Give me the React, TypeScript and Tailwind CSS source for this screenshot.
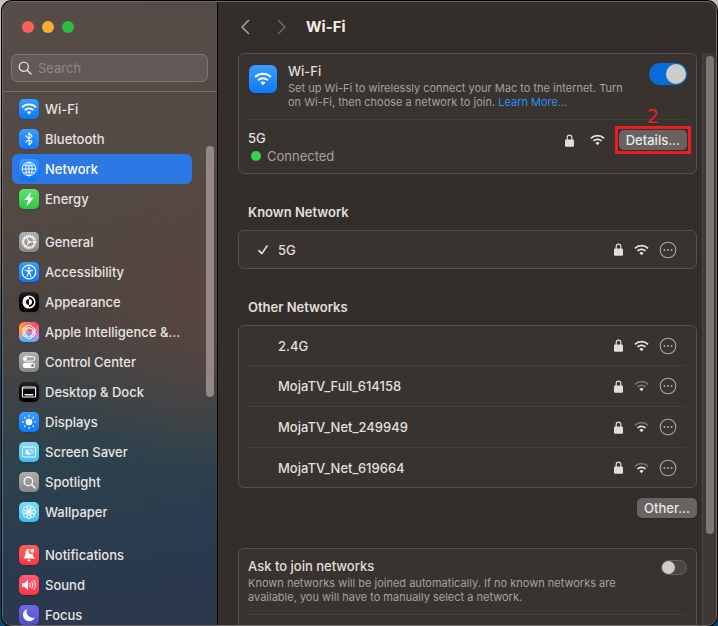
import { useState } from "react";
import type { ReactNode } from "react";
import clsx from "clsx";

type TNavItem = {
  name: string;
  bg: string;
  icon: ReactNode;
};

type TNetwork = {
  name: string;
  strength: number;
};

const WifiGlyph = ({
  className,
  strength = 3,
}: {
  className?: string;
  strength?: number;
}) => (
  <svg viewBox="0 0 16 12" className={className} fill="none" stroke="currentColor">
    <path d="M1 4.3a9.9 9.9 0 0 1 14 0" strokeWidth="1.8" opacity={strength > 2 ? 1 : 0.35} />
    <path d="M3.7 7.1a6 6 0 0 1 8.6 0" strokeWidth="1.8" opacity={strength > 1 ? 1 : 0.35} />
    <path
      d="M8 8.2c-.9 0-1.700.3-2.200.9L8 11.600l2.200-2.500c-.5-.6-1.300-.9-2.200-.9z"
      fill="currentColor"
      stroke="none"
    />
  </svg>
);

const LockGlyph = () => (
  <svg viewBox="0 0 9 13" className="h-[13px] w-[9px] text-[#dfdedd]">
    <path d="M2.2 6V3.4a2.3 2.3 0 0 1 4.6 0V6" fill="none" stroke="currentColor" strokeWidth="1.2" />
    <rect x="0" y="5.4" width="9" height="7.4" rx="1" fill="currentColor" />
  </svg>
);

const SearchGlyph = ({ className }: { className?: string }) => (
  <svg viewBox="0 0 14 14" className={className} fill="none" stroke="currentColor" strokeLinecap="round">
    <circle cx="5.8" cy="5.8" r="4.6" strokeWidth="1.3" />
    <path d="M9.2 9.2l3.8 3.8" strokeWidth="1.5" />
  </svg>
);

const Glyph = ({ children }: { children: ReactNode }) => (
  <svg
    viewBox="0 0 20 20"
    className="size-5"
    fill="none"
    stroke="currentColor"
    strokeLinecap="round"
    strokeLinejoin="round"
  >
    {children}
  </svg>
);

const blue = "bg-linear-to-b from-[#3a9bff] to-[#0a78fb]";
const gray = "bg-linear-to-b from-[#b0b0b0] to-[#868686]";
const black = "bg-linear-to-b from-[#242424] to-black";
const cyan = "bg-linear-to-b from-[#7bdcfb] to-[#45b9ee]";

const groups: TNavItem[][] = [
  [
    { name: "Wi-Fi", bg: blue, icon: <WifiGlyph className="h-3 w-4" /> },
    {
      name: "Bluetooth",
      bg: blue,
      icon: (
        <Glyph>
          <path d="M6.800 6.800l6.200 6-3 3.200V4l3 3.200-6.200 6" strokeWidth="1.1" />
        </Glyph>
      ),
    },
    {
      name: "Network",
      bg: blue,
      icon: (
        <Glyph>
          <g strokeWidth="0.9">
            <circle cx="10" cy="10" r="6.8" />
            <ellipse cx="10" cy="10" rx="3.2" ry="6.8" />
            <path d="M10 3.2v13.6M3.2 10h13.6M4.6 6q5.4 2.4 10.8 0M4.6 14q5.4-2.4 10.8 0" />
          </g>
        </Glyph>
      ),
    },
    {
      name: "Energy",
      bg: "bg-linear-to-b from-[#5fe06c] to-[#2ac944]",
      icon: (
        <Glyph>
          <path d="M12.2 2.800L5.400 11h3.800l-1.600 6.200L14.600 8.800h-4z" fill="currentColor" stroke="none" />
        </Glyph>
      ),
    },
  ],
  [
    {
      name: "General",
      bg: gray,
      icon: (
        <Glyph>
          <circle cx="10" cy="10" r="6.6" strokeWidth="1.5" strokeDasharray="1.2 0.9" strokeLinecap="butt" />
          <circle cx="10" cy="10" r="5.4" strokeWidth="1.1" />
          <path d="M10 10h5M10 10L7.4 5.6M10 10l-2.6 4.4" strokeWidth="1" />
          <circle cx="10" cy="10" r="1.3" fill="currentColor" stroke="none" />
        </Glyph>
      ),
    },
    {
      name: "Accessibility",
      bg: blue,
      icon: (
        <Glyph>
          <circle cx="10" cy="10" r="6.8" strokeWidth="1.2" />
          <circle cx="10" cy="6.2" r="1.2" fill="currentColor" stroke="none" />
          <path d="M6.4 8.3l2.7.6h1.8l2.7-.6M9.2 9v2.4l-1.1 3M10.8 9v2.4l1.1 3M10 9v2.4" strokeWidth="1.1" />
        </Glyph>
      ),
    },
    {
      name: "Appearance",
      bg: black,
      icon: (
        <Glyph>
          <circle cx="10" cy="10" r="5.8" strokeWidth="1.5" />
          <path d="M10 4.2a5.8 5.8 0 0 0 0 11.6z" fill="currentColor" stroke="none" />
          <path d="M10 7a3 3 0 0 0 0 6z" fill="#111" stroke="none" />
          <path d="M10 7a3 3 0 0 1 0 6z" fill="currentColor" stroke="none" />
        </Glyph>
      ),
    },
    {
      name: "Apple Intelligence &...",
      bg: "bg-[conic-gradient(#ff6a5a,#fb4a6c,#f06aa8,#b98cf0,#6aa0f5,#3fb3f5,#b39ae0,#ff9d3b,#ff8a4a,#ff6a5a)]",
      icon: (
        <Glyph>
          <g strokeWidth="1.100">
            <path d="M10 3.200c2 0 2.600 1.600 4 2.200 1.600.8 2.400 2 1.900 3.600-.4 1.400.4 2.400-.1 3.900-.6 1.600-2.300 1.500-3.200 2.600-.9 1-1.600 1.400-2.600 1.400s-1.700-.4-2.600-1.400c-.9-1.100-2.600-1-3.200-2.600-.5-1.500.3-2.500-.1-3.900C3.600 7.400 4.400 6.200 6 5.400c1.400-.6 2-2.200 4-2.200z" />
            <path d="M10 5.600l3.600 1.700.9 3.900-2.500 3.100H8l-2.500-3.100.9-3.900z" />
          </g>
        </Glyph>
      ),
    },
    {
      name: "Control Center",
      bg: gray,
      icon: (
        <Glyph>
          <rect x="4.2" y="4.7" width="11.6" height="4.4" rx="2.2" strokeWidth="1" />
          <circle cx="6.4" cy="6.9" r="1.7" fill="currentColor" stroke="none" />
          <rect x="3.8" y="10.8" width="12.4" height="5.2" rx="2.6" fill="currentColor" stroke="none" />
          <circle cx="13.6" cy="13.4" r="1.6" fill="#8c8c8c" stroke="none" />
        </Glyph>
      ),
    },
    {
      name: "Desktop & Dock",
      bg: black,
      icon: (
        <Glyph>
          <rect x="3.4" y="5" width="13.2" height="10" rx="1" strokeWidth="1.1" />
          <path d="M4 6.3h12" strokeWidth="0.6" />
          <path d="M6.2 12.8h7.6" strokeWidth="1.6" />
        </Glyph>
      ),
    },
    {
      name: "Displays",
      bg: blue,
      icon: (
        <Glyph>
          <circle cx="10" cy="10" r="3.3" fill="currentColor" stroke="none" />
          <path
            d="M10 3.6v.9M10 15.5v.9M3.6 10h.9M15.5 10h.9M5.5 5.5l.6.6M13.9 13.9l.6.6M5.5 14.5l.6-.6M13.9 6.1l.6-.6"
            strokeWidth="1.2"
          />
        </Glyph>
      ),
    },
    {
      name: "Screen Saver",
      bg: cyan,
      icon: (
        <Glyph>
          <rect x="3.5" y="5" width="13" height="10" rx="1" strokeWidth="1" />
          <rect x="5.6" y="7" width="8.8" height="6" fill="currentColor" stroke="none" opacity="0.3" />
          <path d="M9 7.8a2.5 2.5 0 1 0 2.7 3.6A2.6 2.6 0 0 1 9 7.8z" fill="currentColor" stroke="none" />
          <path d="M12 8.2h.1M13.6 9.6h.1" strokeWidth="1" />
        </Glyph>
      ),
    },
    { name: "Spotlight", bg: gray, icon: <SearchGlyph className="size-[13px]" /> },
    {
      name: "Wallpaper",
      bg: cyan,
      icon: (
        <Glyph>
          <circle cx="10" cy="10" r="2.2" fill="currentColor" stroke="none" />
          <g strokeWidth="0.9">
            <circle cx="10" cy="5.2" r="1.9" />
            <circle cx="10" cy="14.8" r="1.9" />
            <circle cx="5.2" cy="10" r="1.9" />
            <circle cx="14.8" cy="10" r="1.9" />
            <circle cx="6.6" cy="6.6" r="1.9" />
            <circle cx="13.4" cy="6.6" r="1.9" />
            <circle cx="6.6" cy="13.4" r="1.9" />
            <circle cx="13.4" cy="13.4" r="1.9" />
          </g>
        </Glyph>
      ),
    },
  ],
  [
    {
      name: "Notifications",
      bg: "bg-linear-to-b from-[#ff5f57] to-[#fa3345]",
      icon: (
        <Glyph>
          <path
            d="M9.8 4C7.4 4 6.6 6 6.4 8.2c-.2 2.6-.7 3.6-2.2 5.2h11.6c-1.4-1.4-2-2.6-2.2-4.6A2.6 2.6 0 0 1 11 4.2 4 4 0 0 0 9.8 4z"
            fill="currentColor"
            stroke="none"
          />
          <circle cx="13.3" cy="5.8" r="2" fill="currentColor" stroke="none" />
          <path d="M8.3 14.8h3.4a1.7 1.7 0 0 1-3.4 0z" fill="currentColor" stroke="none" />
        </Glyph>
      ),
    },
    {
      name: "Sound",
      bg: "bg-linear-to-b from-[#ff5b78] to-[#fc3349]",
      icon: (
        <Glyph>
          <path d="M3 8.2h2.3L9 5v10l-3.7-3.2H3z" fill="currentColor" stroke="none" />
          <path d="M10.8 8.2q1.4 1.8 0 3.6M12.8 6.8q2.4 3.2 0 6.4M14.8 5.4q3.4 4.6 0 9.2" strokeWidth="1" />
        </Glyph>
      ),
    },
    {
      name: "Focus",
      bg: "bg-linear-to-b from-[#6f6be6] to-[#504cc8]",
      icon: (
        <Glyph>
          <path d="M8 4a6.3 6.3 0 1 0 8 8.6A6.5 6.5 0 0 1 8 4z" fill="currentColor" stroke="none" />
        </Glyph>
      ),
    },
  ],
];

const otherNetworks: TNetwork[] = [
  { name: "2.4G", strength: 3 },
  { name: "MojaTV_Full_614158", strength: 1 },
  { name: "MojaTV_Net_249949", strength: 2 },
  { name: "MojaTV_Net_619664", strength: 2 },
];

const Sidebar = () => {
  const [active, setActive] = useState("Network");

  return (
    <aside className="flex w-[215px] shrink-0 flex-col border-r border-black bg-[radial-gradient(circle_at_100%_48%,#5a453f_0%,#5a453f00_45%),linear-gradient(172deg,#564d48_0%,#524944_34%,#4a4542_52%,#2d424d_72%,#2b3a4f_86%,#2c384c_100%)]">
      <div className="flex gap-2 px-[19px] pt-[19px]">
        <button aria-label="Close" className="size-3 rounded-full bg-[#fe5f57]" />
        <button aria-label="Minimize" className="size-3 rounded-full bg-[#fcab2f]" />
        <button aria-label="Zoom" className="size-3 rounded-full bg-[#28bf3c]" />
      </div>
      <div className="border-b border-[#756d69] pt-[21px] pr-[9px] pb-[9px] pl-2">
        <label className="flex h-7 items-center gap-1.5 rounded-md border border-[#7d7572] bg-[#635a57] pl-1.5">
          <SearchGlyph className="size-[14px] shrink-0 text-[#e0dedd]" />
          <input
            type="text"
            aria-label="Search"
            placeholder="Search"
            className="w-full min-w-0 bg-transparent outline-none placeholder:text-[#8f8885]"
          />
        </label>
      </div>
      <div className="flex min-h-0 flex-1 justify-between pr-[3px] pl-[9px]">
        <nav className="flex w-[180px] flex-col gap-[13px] pt-0.5">
          {groups.map((group) => (
            <ul key={group[0].name}>
              {group.map((item) => (
                <li key={item.name}>
                  <button
                    onClick={() => setActive(item.name)}
                    className={clsx(
                      "flex h-[30px] w-full items-center gap-1.5 rounded-md pl-[7px] font-medium whitespace-nowrap",
                      active === item.name ? "bg-[#2c78e4] text-white" : "text-[#e6e4e3]"
                    )}
                  >
                    <span
                      className={clsx(
                        "flex size-5 shrink-0 items-center justify-center rounded-[5px] text-white shadow-sm",
                        item.bg
                      )}
                    >
                      {item.icon}
                    </span>
                    {item.name}
                  </button>
                </li>
              ))}
            </ul>
          ))}
        </nav>
        <div className="mt-[54px] h-[251px] w-2 rounded-full bg-[#938885]" />
      </div>
    </aside>
  );
};

const NetworkRow = ({ network, known }: { network: TNetwork; known?: boolean }) => (
  <li
    className={clsx(
      "flex items-center border-[#433e3b]",
      known ? "h-[37px]" : "h-[41px] border-b first:h-10 last:h-[39px] last:border-b-0"
    )}
  >
    <span className="flex w-[30px] justify-center">
      {known && (
        <svg viewBox="0 0 10 10" className="size-2.5" fill="none" stroke="#e0dfde" strokeWidth="1.6">
          <path d="M1 5.6l2.8 3L9 1" strokeLinecap="round" strokeLinejoin="round" />
        </svg>
      )}
    </span>
    <span className="flex-1 font-medium">{network.name}</span>
    <LockGlyph />
    <WifiGlyph strength={network.strength} className="mr-2.5 ml-[11px] h-3 w-[15px] text-[#e8e7e6]" />
    <button aria-label={`More options for ${network.name}`} className="mr-2.5 size-[18px] text-[#aaa7a5]">
      <svg viewBox="0 0 18 18" className="size-[18px]">
        <circle cx="9" cy="9" r="7.8" fill="none" stroke="currentColor" strokeWidth="1.1" />
        <circle cx="5.4" cy="9" r="1" fill="currentColor" />
        <circle cx="9" cy="9" r="1" fill="currentColor" />
        <circle cx="12.6" cy="9" r="1" fill="currentColor" />
      </svg>
    </button>
  </li>
);

const card = "rounded-md border border-[#54504d] bg-[#393330] px-[9px]";
const heading = "mt-[30px] mb-2.5 pl-2.5 font-semibold";
const pushButton = "h-5 rounded-[5px] bg-[#686360] px-[7px] font-medium text-[#ebeae9] shadow-sm";

const App = () => {
  const [wifiOn, setWifiOn] = useState(true);
  const [askToJoin, setAskToJoin] = useState(false);

  return (
    <div className="h-screen overflow-hidden bg-linear-to-b from-[#c2c2bf] from-15% via-[#8a7466] via-35% to-[#0b4673] to-60% pt-px pr-px pl-0.5 font-['Inter','Liberation_Sans',sans-serif] text-[13px] leading-4 text-[#e0dfde]">
      <div className="flex h-full overflow-hidden rounded-[10px] border border-[#6f6a67] bg-[#342e2b] shadow-[0_0_0_1px_#000]">
        <Sidebar />
        <div className="flex min-w-0 flex-1 flex-col">
          <header className="flex h-[51px] shrink-0 items-center pb-0.5 pl-[22px]">
            <button aria-label="Back" className="text-[#a9a5a3]">
              <svg viewBox="0 0 10 16" className="h-4 w-2.5" fill="none" stroke="currentColor" strokeWidth="1.5">
                <path d="M8.5 1.500L2 8l6.5 6.500" strokeLinecap="round" strokeLinejoin="round" />
              </svg>
            </button>
            <button aria-label="Forward" className="ml-[27px] text-[#6c6764]">
              <svg viewBox="0 0 10 16" className="h-4 w-2.5" fill="none" stroke="currentColor" strokeWidth="1.5">
                <path d="M1.5 1.500L8 8l-6.5 6.500" strokeLinecap="round" strokeLinejoin="round" />
              </svg>
            </button>
            <h1 className="ml-[19px] text-[15px] font-bold text-[#f0efee]">Wi-Fi</h1>
          </header>

          <div className="flex min-h-0 flex-1">
            <main className="min-w-0 flex-1 overflow-hidden pr-[5px] pl-5">
              <section className={card}>
                <div className="flex border-b border-[#433e3b] pt-[9px] pb-2.5">
                  <span
                    className={clsx(
                      "mt-0.5 ml-px flex size-7 shrink-0 items-center justify-center rounded-md text-white shadow-sm",
                      blue
                    )}
                  >
                    <WifiGlyph className="h-3.5 w-[18px]" />
                  </span>
                  <div className="ml-[11px] flex-1">
                    <h2 className="font-medium">Wi-Fi</h2>
                    <p className="mt-0.5 text-[11px] leading-[14px] text-[#a5a19f]">
                      Set up Wi-Fi to wirelessly connect your Mac to the internet. Turn
                      <br />
                      on Wi-Fi, then choose a network to join.{" "}
                      <a href="#" className="text-[#2f8df5]">
                        Learn More...
                      </a>
                    </p>
                  </div>
                  <input
                    type="checkbox"
                    role="switch"
                    aria-label="Wi-Fi"
                    checked={wifiOn}
                    onChange={() => setWifiOn(!wifiOn)}
                    className="flex h-[22px] w-[38px] shrink-0 appearance-none items-center rounded-full bg-[#504b48] p-px before:size-5 before:rounded-full before:bg-[#cfcdcc] checked:justify-end checked:bg-[#0a6bd8]"
                  />
                </div>
                <div className="flex items-start">
                  <div className="flex-1 pt-2.5 pb-[9px]">
                    <h3 className="font-medium">5G</h3>
                    <p className="mt-0.5 flex items-center gap-1.5 pl-[3px] text-[#a5a19f]">
                      <span className="size-2.5 rounded-full bg-[#32d74b]" />
                      Connected
                    </p>
                  </div>
                  <div className="-mr-1 mt-1.5 flex items-center">
                    <LockGlyph />
                    <WifiGlyph className="mr-2.5 ml-4 h-3 w-[15px] text-[#e8e7e6]" />
                    <div className="relative border-[3px] border-[#ee1c25] p-px">
                      <span className="absolute -top-[22px] left-1/2 -translate-x-1/2 font-['DejaVu_Sans',sans-serif] text-[19px] leading-[18px] text-[#ee1c25]">
                        2
                      </span>
                      <button className={clsx(pushButton, "block")}>Details...</button>
                    </div>
                  </div>
                </div>
              </section>

              <h2 className={heading}>Known Network</h2>
              <ul className={card}>
                <NetworkRow network={{ name: "5G", strength: 3 }} known />
              </ul>

              <h2 className={heading}>Other Networks</h2>
              <ul className={card}>
                {otherNetworks.map((network) => (
                  <NetworkRow key={network.name} network={network} />
                ))}
              </ul>
              <div className="mt-2.5 flex justify-end">
                <button className={pushButton}>Other...</button>
              </div>

              <section className={clsx(card, "mt-[30px]")}>
                <div className="flex border-b border-[#433e3b] pt-[9px] pb-2.5">
                  <div className="flex-1">
                    <label htmlFor="ask-to-join" className="block font-medium">
                      Ask to join networks
                    </label>
                    <p className="mt-0.5 max-w-[380px] text-[11px] leading-[14px] text-[#a5a19f]">
                      Known networks will be joined automatically. If no known networks are available, you will
                      have to manually select a network.
                    </p>
                  </div>
                  <input
                    id="ask-to-join"
                    type="checkbox"
                    role="switch"
                    checked={askToJoin}
                    onChange={() => setAskToJoin(!askToJoin)}
                    className="mt-0.5 flex h-[15px] w-[26px] shrink-0 appearance-none items-center rounded-full border border-[#64605d] bg-[#4a4542] before:size-[13px] before:rounded-full before:bg-[#cfcdcc] checked:justify-end checked:bg-[#0a6bd8]"
                  />
                </div>
                <div className="h-10" />
              </section>
            </main>
            <div className="w-3.5 shrink-0 border-l border-[#4c4744] bg-[#3e3936] pt-[3px] pl-[3px]">
              <div className="h-[478px] w-2 rounded-full bg-[#7d7876]" />
            </div>
          </div>
        </div>
      </div>
    </div>
  );
};

export default App;
